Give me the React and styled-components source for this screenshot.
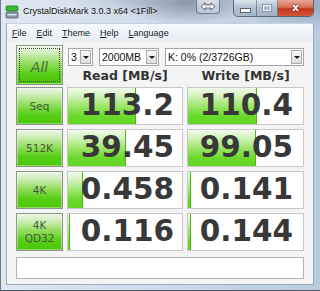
import styled, { createGlobalStyle } from "styled-components";

const GlobalStyle = createGlobalStyle`
  html, body {
    margin: 0;
    padding: 0;
    overflow: hidden;
    background: #ffffff;
  }
`;

const rows = [
  { label: ["Seq"], read: "113.2", write: "110.4", readPct: 60, writePct: 60 },
  { label: ["512K"], read: "39.45", write: "99.05", readPct: 51, writePct: 59 },
  { label: ["4K"], read: "0.458", write: "0.141", readPct: 13, writePct: 3 },
  { label: ["4K", "QD32"], read: "0.116", write: "0.144", readPct: 2, writePct: 3 },
];

const menus = ["File", "Edit", "Theme", "Help", "Language"];

// little disk icon in the title bar
const AppIcon = () => (
  <svg width="14" height="14" viewBox="0 0 14 14">
    <rect x="1" y="1" width="12" height="5" rx="1" fill="#3cb83c" stroke="#1f7a1f" strokeWidth="0.8" />
    <rect x="1" y="7" width="12" height="6" rx="1" fill="#8c9aa6" stroke="#4f5a64" strokeWidth="0.8" />
    <rect x="2.5" y="9" width="9" height="1.4" fill="#dfe6ec" />
  </svg>
);

const SwapGlyph = () => (
  <svg width="16" height="9" viewBox="0 0 16 9">
    <path
      d="M1 4.5 L5 1 L5 3 L11 3 L11 1 L15 4.5 L11 8 L11 6 L5 6 L5 8 Z"
      fill="#ffffff"
      stroke="#4a5866"
      strokeWidth="0.9"
      strokeLinejoin="round"
    />
  </svg>
);

const App = () => {
  return (
    <>
      <GlobalStyle />
      <Window>
        <TitleBar>
          <IconSlot>
            <AppIcon />
          </IconSlot>
          <Title>CrystalDiskMark 3.0.3 x64 &lt;1Fill&gt;</Title>
          <Captions>
            <ExtraButton>
              <SwapGlyph />
            </ExtraButton>
            <CaptionGroup>
              <CaptionButton $w={22}>
                <MinGlyph />
              </CaptionButton>
              <CaptionButton $w={20}>
                <MaxGlyph />
              </CaptionButton>
              <CloseButton>x</CloseButton>
            </CaptionGroup>
          </Captions>
        </TitleBar>

        <Frame>
          <Client>
            <MenuBar>
              {menus.map((m) => (
                <MenuItem key={m}>
                  <u>{m[0]}</u>
                  {m.slice(1)}
                </MenuItem>
              ))}
            </MenuBar>

            <Content>
              <TopSection>
                <AllButton>
                  <FocusRect>All</FocusRect>
                </AllButton>
                <RightColumn>
                  <ComboRow>
                    <Combo $w={25}>
                      <ComboText>3</ComboText>
                      <ComboArrow />
                    </Combo>
                    <Combo $w={60}>
                      <ComboText>2000MB</ComboText>
                      <ComboArrow />
                    </Combo>
                    <Combo $w={139}>
                      <ComboText>K: 0% (2/3726GB)</ComboText>
                      <ComboArrow />
                    </Combo>
                  </ComboRow>
                  <HeaderRow>
                    <Header $w={116}>Read [MB/s]</Header>
                    <Header $w={117}>Write [MB/s]</Header>
                  </HeaderRow>
                </RightColumn>
              </TopSection>

              <Rows>
                {rows.map((r) => (
                  <Row key={r.label.join("-")}>
                    <TestButton>
                      {r.label.map((l) => (
                        <span key={l}>{l}</span>
                      ))}
                    </TestButton>
                    <Cell $w={116}>
                      <Meter style={{ width: `${r.readPct}%` }} />
                      <Value>{r.read}</Value>
                    </Cell>
                    <Cell $w={117}>
                      <Meter style={{ width: `${r.writePct}%` }} />
                      <Value $pad={10}>{r.write}</Value>
                    </Cell>
                  </Row>
                ))}
              </Rows>

              <StatusBar />
            </Content>
          </Client>
        </Frame>
      </Window>
    </>
  );
};

// Styled Components
const Window = styled.div`
  width: 320px;
  height: 291px;
  box-sizing: border-box;
  display: flex;
  flex-direction: column;
  border-left: 1px solid #6a7a8a;
  border-bottom: 1px solid #4c5a68;
  background:
    radial-gradient(ellipse 70px 22px at 185px 2px, rgba(80, 98, 118, 0.55), transparent),
    radial-gradient(ellipse 60px 26px at 300px 4px, rgba(96, 116, 138, 0.45), transparent),
    radial-gradient(ellipse 50px 18px at 120px 0px, rgba(150, 168, 186, 0.35), transparent),
    linear-gradient(to right, #dfe8f1 0%, #cfdceb 45%, #b9cbdd 100%);
  font-family: "Liberation Sans", Arial, sans-serif;
`;

const TitleBar = styled.div`
  height: 23px;
  flex-shrink: 0;
  display: flex;
  align-items: flex-start;
`;

const IconSlot = styled.div`
  margin: 5px 0 0 4px;
  width: 14px;
  height: 14px;
`;

const Title = styled.div`
  margin-left: 4px;
  line-height: 23px;
  font-size: 9px;
  color: #111;
  white-space: nowrap;
  text-shadow: 0 0 6px rgba(255, 255, 255, 0.9);
`;

const Captions = styled.div`
  margin-left: auto;
  display: flex;
  align-items: flex-start;
  padding-right: 6px;
`;

const ExtraButton = styled.div`
  width: 24px;
  height: 14px;
  box-sizing: border-box;
  margin-right: 13px;
  display: flex;
  align-items: center;
  justify-content: center;
  border: 1px solid rgba(70, 86, 102, 0.7);
  border-top: none;
  border-radius: 0 0 4px 4px;
  background: linear-gradient(to bottom, rgba(255, 255, 255, 0.6), rgba(200, 212, 224, 0.5));
`;

const CaptionGroup = styled.div`
  display: flex;
  height: 16px;
  border: 1px solid rgba(60, 74, 90, 0.75);
  border-top: none;
  border-radius: 0 0 5px 5px;
  overflow: hidden;
`;

const CaptionButton = styled.div`
  width: ${(p) => p.$w}px;
  display: flex;
  align-items: center;
  justify-content: center;
  border-right: 1px solid rgba(60, 74, 90, 0.5);
  background: linear-gradient(to bottom, rgba(235, 242, 248, 0.75), rgba(170, 186, 202, 0.6) 50%, rgba(150, 168, 186, 0.6));
`;

const MinGlyph = styled.div`
  width: 9px;
  height: 3px;
  margin-top: 5px;
  background: #fff;
  border: 1px solid #56616c;
`;

const MaxGlyph = styled.div`
  width: 8px;
  height: 6px;
  border: 1px solid #8898a8;
  box-shadow: inset 0 0 0 1px #f0f4f8;
`;

const CloseButton = styled.div`
  width: 35px;
  display: flex;
  align-items: center;
  justify-content: center;
  font-family: "DejaVu Sans", sans-serif;
  font-weight: bold;
  font-size: 11px;
  line-height: 1;
  padding-bottom: 2px;
  box-sizing: border-box;
  color: #fff;
  text-shadow: 0 0 2px #5a1408, 0 0 1px #5a1408;
  background: linear-gradient(to bottom, #e9a797 0%, #d9705a 45%, #c4361d 55%, #d2553a 100%);
`;

const Frame = styled.div`
  flex: 1;
  display: flex;
  padding: 0 6px 5px 5px;
`;

const Client = styled.div`
  flex: 1;
  display: flex;
  flex-direction: column;
  background: #f4f4f4;
  border: 1px solid #9aabbd;
  border-top-color: #c4d2e0;
`;

const MenuBar = styled.div`
  height: 17px;
  flex-shrink: 0;
  display: flex;
  align-items: center;
  background: linear-gradient(to bottom, #f7f9fc, #e9eef5);
  border-bottom: 1px solid #f0f0f0;
`;

const MenuItem = styled.div`
  padding: 0 5px;
  font-size: 9px;
  color: #1a1a1a;

  u {
    text-decoration: underline;
    text-underline-offset: 1px;
  }
`;

const Content = styled.div`
  display: flex;
  flex-direction: column;
  padding: 3px 0 0 9px;
`;

const TopSection = styled.div`
  display: flex;
  gap: 4px;
`;

const greenFace = `
  border: 1px solid #8d968a;
  background: linear-gradient(
    to bottom,
    #eef6ea 0%,
    #c9ecb0 22%,
    #8fdc5a 48%,
    #55cd14 75%,
    #4cc80a 100%
  );
  box-shadow: inset 0 0 0 1px rgba(255, 255, 255, 0.35);
`;

const AllButton = styled.div`
  width: 47px;
  height: 40px;
  box-sizing: border-box;
  padding: 2px;
  display: flex;
  ${greenFace}
`;

const FocusRect = styled.div`
  flex: 1;
  display: flex;
  align-items: center;
  justify-content: center;
  border: 1px dotted #3e4a3a;
  padding-top: 4px;
  font-family: "DejaVu Sans", sans-serif;
  font-style: italic;
  font-size: 14px;
  color: #4b6a3c;
`;

const RightColumn = styled.div`
  width: 237px;
  display: flex;
  flex-direction: column;
`;

const ComboRow = styled.div`
  display: flex;
  gap: 6px;
  margin: 3px 0 0 1px;
`;

const Combo = styled.div`
  width: ${(p) => p.$w}px;
  height: 18px;
  box-sizing: border-box;
  display: flex;
  align-items: center;
  background: #fff;
  border: 1px solid #a2a5ab;
`;

const ComboText = styled.span`
  flex: 1;
  padding-left: 2px;
  font-size: 10.5px;
  color: #111;
  white-space: nowrap;
`;

const ComboArrow = styled.div`
  width: 11px;
  height: 14px;
  box-sizing: border-box;
  margin-right: 1px;
  flex-shrink: 0;
  border: 1px solid #a9abb0;
  background: linear-gradient(to bottom, #f8f8f8, #dedede);
  position: relative;

  &::after {
    content: "";
    position: absolute;
    left: 2px;
    top: 5px;
    border-left: 3px solid transparent;
    border-right: 3px solid transparent;
    border-top: 3px solid #1c1c1c;
  }
`;

const HeaderRow = styled.div`
  display: flex;
  gap: 4px;
  height: 19px;
  align-items: center;
`;

const Header = styled.div`
  width: ${(p) => p.$w}px;
  text-align: center;
  font-family: "DejaVu Sans", sans-serif;
  font-weight: bold;
  font-size: 12.5px;
  color: #333;
`;

const Rows = styled.div`
  display: flex;
  flex-direction: column;
  gap: 4px;
  margin-top: 2px;
`;

const Row = styled.div`
  display: flex;
  gap: 4px;
  height: 38px;
`;

const TestButton = styled.div`
  width: 47px;
  box-sizing: border-box;
  display: flex;
  flex-direction: column;
  align-items: center;
  justify-content: center;
  font-family: "DejaVu Sans", sans-serif;
  font-size: 10.5px;
  line-height: 13px;
  color: #44593c;
  ${greenFace}
`;

const Cell = styled.div`
  width: ${(p) => p.$w}px;
  box-sizing: border-box;
  position: relative;
  overflow: hidden;
  display: flex;
  align-items: center;
  justify-content: flex-end;
  background: #fff;
  border: 1px solid #c8c8c8;
`;

const Meter = styled.div`
  position: absolute;
  left: 0;
  top: 0;
  bottom: 0;
  box-sizing: border-box;
  border-right: 1px solid #4bb514;
  background: linear-gradient(
    to bottom,
    #f1faec 0%,
    #d3f2bc 22%,
    #9ee66c 50%,
    #6ad92a 78%,
    #62d622 100%
  );
`;

const Value = styled.div`
  position: relative;
  padding-right: ${(p) => p.$pad || 8}px;
  font-family: "DejaVu Sans", Verdana, sans-serif;
  font-weight: bold;
  font-size: 29.5px;
  line-height: 1;
  color: #383838;
`;

const StatusBar = styled.div`
  width: 288px;
  height: 22px;
  box-sizing: border-box;
  margin-top: 6px;
  background: #fff;
  border: 1px solid #b4b4b4;
`;

export default App;
